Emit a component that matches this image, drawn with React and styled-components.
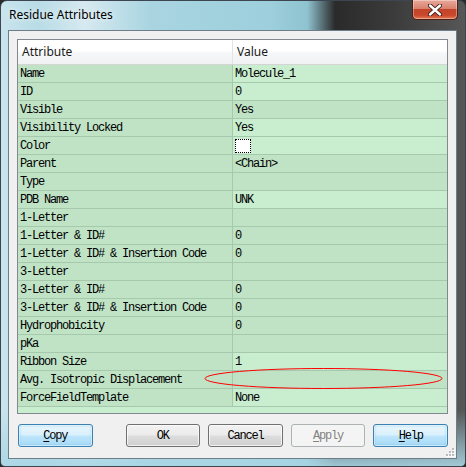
import React from 'react';
import styled, { createGlobalStyle, css } from 'styled-components';

const Global = createGlobalStyle`
  html, body { margin: 0; padding: 0; background: #2b2b2b; }
  body { width: 466px; height: 467px; overflow: hidden; }
  * { box-sizing: border-box; }
`;

const Window = styled.div`
  position: relative;
  width: 466px;
  height: 467px;
  display: flex;
  flex-direction: column;
  padding: 0 8px 7px 7px;
  border: 1px solid #3d4650;
  border-radius: 7px 7px 5px 5px;
  background:
    linear-gradient(180deg, rgba(255,255,255,0) 0%, rgba(255,255,255,0) 88%, rgba(170,214,228,0.9) 100%),
    linear-gradient(90deg, #c9e4ec 0%, #b8dce6 8%, #d6e9f0 18%, #a9d5e1 32%, #9dcfdc 58%, #8fc3d0 66%, #2a2a2a 72%, #3c3c3c 85%, #575757 100%);
`;

const TitleBar = styled.div`
  height: 29px;
  display: flex;
  justify-content: space-between;
  align-items: flex-start;
`;

const Title = styled.div`
  font-family: "Noto Sans", "Open Sans", sans-serif;
  font-size: 12px;
  line-height: 14px;
  color: #000;
  padding-top: 7px;
  padding-left: 1px;
  text-shadow: 0 0 6px rgba(255,255,255,0.9);
`;

const CloseBtn = styled.div`
  width: 46px;
  height: 20px;
  margin-right: -1px;
  margin-top: -1px;
  border: 1px solid #4f1f17;
  border-top: none;
  border-radius: 0 0 5px 5px;
  background: linear-gradient(180deg, #e9a99b 0%, #d9826e 45%, #c2452b 50%, #c9472c 80%, #e27a52 100%);
  box-shadow: inset 0 0 0 1px rgba(255,255,255,0.35);
  display: flex;
  align-items: center;
  justify-content: center;
`;

const Client = styled.div`
  flex: 1;
  background: #f0f0f0;
  border: 1px solid #6e7d8a;
  padding: 8px 8px 10px 8px;
  display: flex;
  flex-direction: column;
  gap: 10px;
  position: relative;
`;

const Grid = styled.div`
  border: 1px solid #828790;
  height: 375px;
  display: flex;
  flex-direction: column;
  background: #c8edcf;
`;

const HeaderRow = styled.div`
  height: 25px;
  display: grid;
  grid-template-columns: 215px 1fr;
  background: linear-gradient(180deg, #ffffff 0%, #ffffff 45%, #f5f6f8 55%, #f1f2f4 100%);
  border-bottom: 1px solid #d5d5d5;
`;

const HeaderCell = styled.div`
  font-family: "Noto Sans", "Open Sans", sans-serif;
  font-size: 12px;
  color: #1a1a1a;
  display: flex;
  align-items: center;
  padding-left: 4px;
  padding-bottom: 1px;
  ${p => p.$first && css`border-right: 1px solid #e3e4e6;`}
`;

const Row = styled.div`
  height: 18px;
  display: grid;
  grid-template-columns: 215px 1fr;
  border-bottom: 1px solid #a6c8ac;
`;

const Cell = styled.div`
  font-family: "Liberation Mono", "DejaVu Sans Mono", monospace;
  font-size: 12px;
  letter-spacing: -1.2px;
  color: #000;
  padding-left: 2px;
  display: flex;
  align-items: center;
  white-space: pre;
  background: ${p => (p.$light ? '#c8edcf' : '#c0e3c6')};
  ${p => p.$first && css`border-right: 1px solid #a6c8ac;`}
`;

const Swatch = styled.span`
  display: inline-block;
  width: 16px;
  height: 14px;
  background: #fff;
  border: 1px dotted #000;
`;

const Filler = styled.div`
  flex: 1;
  background: #c8edcf;
`;

const ButtonRow = styled.div`
  display: flex;
  align-items: center;
  gap: 8px;
  padding-left: 1px;
`;

const Spacer = styled.div`
  width: 17px;
`;

const Button = styled.div`
  width: 75px;
  height: 23px;
  border-radius: 3px;
  display: flex;
  align-items: center;
  justify-content: center;
  font-family: "Liberation Mono", "DejaVu Sans Mono", monospace;
  font-size: 12px;
  letter-spacing: -1.2px;
  color: #000;
  border: 1px solid #707070;
  background: linear-gradient(180deg, #f2f2f2 0%, #ebebeb 48%, #dddddd 52%, #cfcfcf 100%);
  box-shadow: inset 0 0 0 1px rgba(255,255,255,0.7);
  u { text-decoration: underline; text-underline-offset: 2px; }
  ${p => p.$variant === 'blue' && css`
    border-color: #3c7fb1;
    background: linear-gradient(180deg, #eaf6fd 0%, #d9f0fc 48%, #bee6fd 52%, #a7d9f5 100%);
    box-shadow: inset 0 0 0 1px rgba(255,255,255,0.55), inset 0 0 2px 1px rgba(90,190,240,0.5);
  `}
  ${p => p.$variant === 'disabled' && css`
    border-color: #adb2b5;
    background: #f4f4f4;
    color: #838383;
    box-shadow: none;
  `}
`;

const Grip = styled.svg`
  position: absolute;
  right: 1px;
  bottom: 1px;
`;

const Annotation = styled.svg`
  position: absolute;
  left: -1px;
  top: -1px;
  pointer-events: none;
`;

const rows = [
  ['Name', 'Molecule_1', true],
  ['ID', '0', true],
  ['Visible', 'Yes', false],
  ['Visibility Locked', 'Yes', true],
  ['Color', 'swatch', true],
  ['Parent', '<Chain>', false],
  ['Type', '', false],
  ['PDB Name', 'UNK', true],
  ['1-Letter', '', false],
  ['1-Letter & ID#', '0', false],
  ['1-Letter & ID# & Insertion Code', '0', false],
  ['3-Letter', '', false],
  ['3-Letter & ID#', '0', false],
  ['3-Letter & ID# & Insertion Code', '0', false],
  ['Hydrophobicity', '0', false],
  ['pKa', '', false],
  ['Ribbon Size', '1', true],
  ['Avg. Isotropic Displacement', '', false],
  ['ForceFieldTemplate', 'None', true],
];

export default function App() {
  return (
    <>
      <Global />
      <Window>
        <TitleBar>
          <Title>Residue Attributes</Title>
          <CloseBtn>
            <svg width="14" height="12" viewBox="0 0 14 12">
              <path d="M2 1.5 L12 10.5 M12 1.5 L2 10.5" stroke="#3a1a14" strokeWidth="4.2" strokeLinecap="round" />
              <path d="M2 1.5 L12 10.5 M12 1.5 L2 10.5" stroke="#fff" strokeWidth="2.4" strokeLinecap="round" />
            </svg>
          </CloseBtn>
        </TitleBar>
        <Client>
          <Grid>
            <HeaderRow>
              <HeaderCell $first>Attribute</HeaderCell>
              <HeaderCell>Value</HeaderCell>
            </HeaderRow>
            {rows.map(([k, v, light]) => (
              <Row key={k}>
                <Cell $first $light={false}>{k}</Cell>
                <Cell $light={light}>{v === 'swatch' ? <Swatch /> : v}</Cell>
              </Row>
            ))}
            <Filler />
          </Grid>
          <ButtonRow>
            <Button $variant="blue"><span><u>C</u>opy</span></Button>
            <Spacer />
            <Button>OK</Button>
            <Button>Cancel</Button>
            <Button $variant="disabled"><span><u>A</u>pply</span></Button>
            <Button $variant="blue"><span><u>H</u>elp</span></Button>
          </ButtonRow>
          <Grip width="10" height="10" viewBox="0 0 10 10">
            {[[7, 1], [4, 4], [7, 4], [1, 7], [4, 7], [7, 7]].map(([x, y]) => (
              <g key={`${x}-${y}`}>
                <rect x={x + 1} y={y + 1} width="2" height="2" fill="#fff" />
                <rect x={x} y={y} width="2" height="2" fill="#b8bcc0" />
              </g>
            ))}
          </Grip>
        </Client>
        <Annotation width="466" height="467" viewBox="0 0 466 467">
          <ellipse cx="323.5" cy="378.5" rx="118.5" ry="10" fill="none" stroke="#ff0000" strokeWidth="1" />
        </Annotation>
      </Window>
    </>
  );
}
